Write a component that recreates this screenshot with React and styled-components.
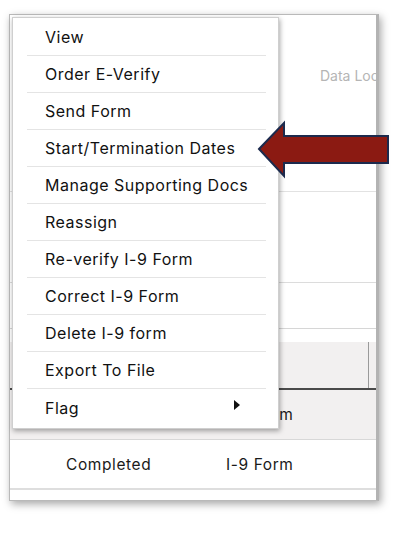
import React from "react";
import styled, { createGlobalStyle } from "styled-components";

const GlobalStyle = createGlobalStyle`
  html, body {
    margin: 0;
    padding: 0;
    background: #ffffff;
    font-family: "Inter", "Noto Sans", sans-serif;
  }
`;

const Page = styled.div`
  width: 400px;
  height: 534px;
  padding: 14px 21px 0 9px;
  box-sizing: border-box;
  position: relative;
`;

const Card = styled.div`
  height: 487px;
  background: #ffffff;
  border: 1px solid #b9b9b9;
  border-right: 3px solid #b3b3b3;
  box-shadow: 2px 3px 8px rgba(0, 0, 0, 0.35);
  display: flex;
  flex-direction: column;
  box-sizing: border-box;
  overflow: hidden;
`;

const TopArea = styled.div`
  height: 177px;
  display: flex;
  justify-content: flex-end;
  padding-top: 52px;
  box-sizing: border-box;
  border-bottom: 1px solid #e2e2e2;
`;

const FadedLabel = styled.span`
  font-size: 14px;
  color: #b5b5b5;
  white-space: nowrap;
  width: 56px;
  overflow: hidden;
`;

const Band = styled.div`
  height: ${(p) => p.$h}px;
  background: ${(p) => p.$bg || "#ffffff"};
  border-bottom: ${(p) => p.$line || "none"};
  box-sizing: border-box;
  display: flex;
  align-items: center;
`;

const HeaderBand = styled.div`
  height: 48px;
  margin-top: 13px;
  background: #f2f0f0;
  border-bottom: 2px solid #4a4a4a;
  display: flex;
  justify-content: flex-end;
  box-sizing: border-box;
`;

const HeaderDivider = styled.div`
  width: 7px;
  border-left: 1px solid #9a9a9a;
`;

const Cell = styled.span`
  font-size: 15.5px;
  letter-spacing: 0.6px;
  color: #1a1a1a;
  width: ${(p) => p.$w}px;
  padding-left: ${(p) => p.$pl || 0}px;
  white-space: nowrap;
  flex-shrink: 0;
`;

const Menu = styled.ul`
  position: absolute;
  left: 12px;
  top: 17px;
  width: 267px;
  margin: 0;
  padding: 1px 12px 2px 14px;
  box-sizing: border-box;
  list-style: none;
  background: #ffffff;
  border: 1px solid #cfcfcf;
  box-shadow: 1px 2px 5px rgba(0, 0, 0, 0.35);
`;

const Item = styled.li`
  height: 37px;
  display: flex;
  align-items: center;
  justify-content: space-between;
  padding: 0 26px 0 18px;
  font-size: 16px;
  letter-spacing: 0.5px;
  white-space: nowrap;
  color: #111111;
  border-bottom: ${(p) => (p.$last ? "none" : "1px solid #e4e4e4")};
  box-sizing: border-box;
`;

const Caret = styled.span`
  width: 0;
  height: 0;
  border-top: 5px solid transparent;
  border-bottom: 5px solid transparent;
  border-left: 6px solid #111111;
  margin-top: -6px;
`;

const Pointer = styled.svg`
  position: absolute;
  left: 256px;
  top: 120px;
`;

const items = [
  "View",
  "Order E-Verify",
  "Send Form",
  "Start/Termination Dates",
  "Manage Supporting Docs",
  "Reassign",
  "Re-verify I-9 Form",
  "Correct I-9 Form",
  "Delete I-9 form",
  "Export To File",
];

export default function App() {
  return (
    <>
      <GlobalStyle />
      <Page>
        <Card>
          <TopArea>
            <FadedLabel>Data Location</FadedLabel>
          </TopArea>
          <Band $h={91} $line="1px solid #dcdcdc" />
          <Band $h={46} $line="1px solid #d6d6d6" />
          <HeaderBand>
            <HeaderDivider />
          </HeaderBand>
          <Band $h={50} $bg="#f2f0f0" $line="1px solid #d8d8d8">
            <Cell $w={216} />
            <Cell $w={120}>I-9 Form</Cell>
          </Band>
          <Band $h={50} $line="2px solid #dedede">
            <Cell $w={160} $pl={56}>Completed</Cell>
            <Cell $w={120}>I-9 Form</Cell>
          </Band>
        </Card>

        <Menu>
          {items.map((label) => (
            <Item key={label}>{label}</Item>
          ))}
          <Item $last>
            Flag
            <Caret />
          </Item>
        </Menu>

        <Pointer width="136" height="60" viewBox="0 0 136 60">
          <path
            d="M3 29 L28 3 L28 16 L132 16 L132 43 L28 43 L28 56 Z"
            fill="#8b1a12"
            stroke="#1c2a4d"
            strokeWidth="2"
            strokeLinejoin="miter"
          />
        </Pointer>
      </Page>
    </>
  );
}
